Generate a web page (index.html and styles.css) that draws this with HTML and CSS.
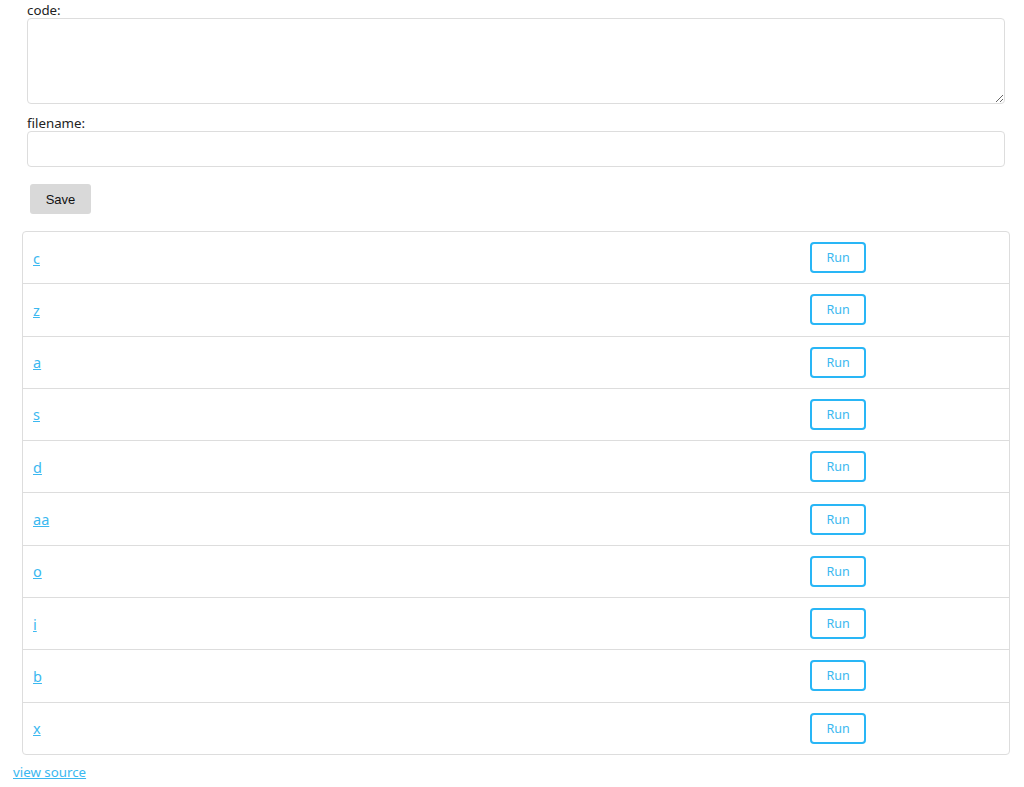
FILE: index.html
```html
<!DOCTYPE html>
<html lang="en">
<head>
    <meta charset="UTF-8">
    <title>Code runner</title>
    <link rel="stylesheet" href="styles.css">
</head>
<body>
    <form class="editor">
        <label class="field-label" for="code">code:</label>
        <textarea id="code" class="code-box"></textarea>
        <label class="field-label filename-label" for="filename">filename:</label>
        <input id="filename" class="name-box" type="text">
        <button type="button" class="save-btn">Save</button>
    </form>

    <div class="file-list">
        <div class="file-row"><a href="#">c</a><div><button class="run-btn">Run</button></div></div>
        <div class="file-row"><a href="#">z</a><div><button class="run-btn">Run</button></div></div>
        <div class="file-row"><a href="#">a</a><div><button class="run-btn">Run</button></div></div>
        <div class="file-row"><a href="#">s</a><div><button class="run-btn">Run</button></div></div>
        <div class="file-row"><a href="#">d</a><div><button class="run-btn">Run</button></div></div>
        <div class="file-row"><a href="#">aa</a><div><button class="run-btn">Run</button></div></div>
        <div class="file-row"><a href="#">o</a><div><button class="run-btn">Run</button></div></div>
        <div class="file-row"><a href="#">i</a><div><button class="run-btn">Run</button></div></div>
        <div class="file-row"><a href="#">b</a><div><button class="run-btn">Run</button></div></div>
        <div class="file-row"><a href="#">x</a><div><button class="run-btn">Run</button></div></div>
    </div>

    <a class="source-link" href="#">view source</a>
</body>
</html>
```

FILE: styles.css
```css
* {
    box-sizing: border-box;
}

body {
    margin: 0;
    padding: 0 13px;
    font-family: "Noto Sans", "Open Sans", sans-serif;
    font-size: 13.3px;
    color: #222;
    background: #fff;
}

a {
    color: #3bb8f0;
}

.editor {
    display: flex;
    flex-direction: column;
    align-items: flex-start;
    padding: 0 6px 0 14px;
}

.field-label {
    display: block;
    line-height: 16px;
    margin-top: 2px;
}

.filename-label {
    margin-top: 11px;
}

.code-box,
.name-box {
    width: 100%;
    border: 1px solid #ddd;
    border-radius: 4px;
    font-family: inherit;
    font-size: 14px;
    padding: 6px 8px;
}

.code-box {
    height: 86px;
    resize: vertical;
}

.name-box {
    height: 36px;
}

.save-btn {
    margin: 17px 0 0 3px;
    width: 61px;
    height: 30px;
    border: none;
    border-radius: 3px;
    background: #d9d9d9;
    color: #111;
    font-family: "Liberation Sans", Arial, sans-serif;
    font-size: 13px;
}

.file-list {
    margin: 17px 0 0 9px;
    width: 988px;
    border: 1px solid #ddd;
    border-radius: 4px;
}

.file-row {
    display: grid;
    grid-template-columns: 777px 1fr;
    align-items: center;
    padding: 10.15px 10px;
    border-top: 1px solid #ddd;
    font-size: 14.5px;
}

.file-row:first-child {
    border-top: none;
}

.run-btn {
    width: 56px;
    height: 31px;
    background: #fff;
    border: 2px solid #29b6f6;
    border-radius: 4px;
    color: #3bb8f0;
    font-family: inherit;
    font-size: 12.5px;
}

.source-link {
    display: inline-block;
    margin-top: 8px;
}
```
